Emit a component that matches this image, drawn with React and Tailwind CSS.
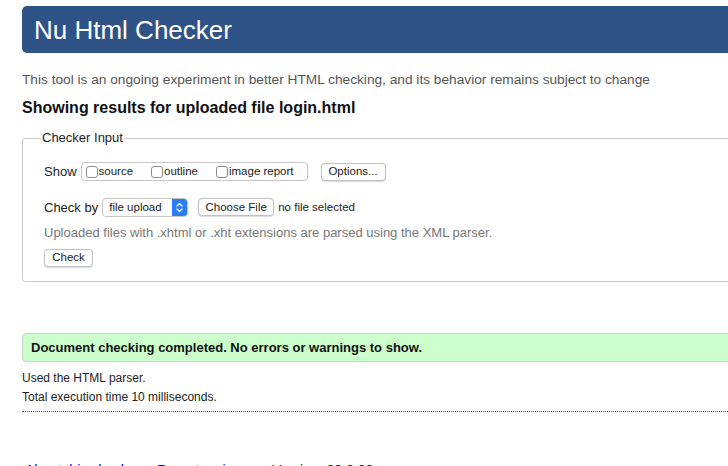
import React from 'react';

const Box = ({ label }) => (
  <label className="flex items-center">
    <span className="w-[12px] h-[12px] border border-[#8d8d8d] rounded-[3px] bg-white mr-[1px]"></span>
    <span>{label}</span>
  </label>
);

const Btn = ({ children, className = '' }) => (
  <span className={`inline-flex items-center whitespace-nowrap px-[6px] h-[18px] border border-[#c2c2c2] rounded-[4px] bg-white shadow-[0_0.5px_1px_rgba(0,0,0,0.15)] text-[11.5px] text-[#222] ${className}`}>
    {children}
  </span>
);

export default function App() {
  return (
    <div className="w-[728px] h-[466px] overflow-hidden bg-white font-['Liberation_Sans',Arial,sans-serif] text-[#222]">
      <div className="w-[760px] pl-[22px] pt-[6px]">
        {/* header bar */}
        <div className="h-[47px] bg-[#2f5387] rounded-l-[5px] flex items-center pl-[12px]">
          <h1 className="text-white text-[26px] leading-none">Nu Html Checker</h1>
        </div>

        <p className="mt-[19px] text-[13.7px] text-[#555] leading-[16px]">
          This tool is an ongoing experiment in better HTML checking, and its behavior remains subject to change
        </p>
        <h2 className="mt-[10px] text-[16px] font-bold leading-[20px] text-[#111]">
          Showing results for uploaded file login.html
        </h2>

        {/* checker input */}
        <fieldset className="mt-[12px] border border-[#c8c8c8] rounded-[3px] pl-[21px] h-[152px]">
          <legend className="text-[13px] px-[1px] ml-[-3px] leading-[16px]">Checker Input</legend>
          <div className="flex items-center mt-[16px] text-[13px]">
            <span className="mr-[4px]">Show</span>
            <div className="flex items-center h-[19px] border border-[#c6c6c6] rounded-[4px] px-[4px] gap-[18px] text-[11.5px] w-[227px]">
              <Box label="source" />
              <Box label="outline" />
              <Box label="image report" />
            </div>
            <Btn className="ml-[13px] w-[65px] justify-center">Options...</Btn>
          </div>
          <div className="flex items-center mt-[16px] text-[13px]">
            <span className="mr-[4px]">Check by</span>
            <span className="flex items-stretch h-[19px] w-[86px] border border-[#c6c6c6] rounded-[4px] overflow-hidden text-[11.5px] bg-white">
              <span className="flex-1 flex items-center pl-[6px]">file upload</span>
              <span className="w-[15px] bg-[#2a7ef4] flex items-center justify-center">
                <svg width="7" height="11" viewBox="0 0 7 11" fill="none" stroke="white" strokeWidth="1.3" strokeLinecap="round" strokeLinejoin="round">
                  <path d="M1 4 L3.5 1.5 L6 4" />
                  <path d="M1 7 L3.5 9.5 L6 7" />
                </svg>
              </span>
            </span>
            <Btn className="ml-[10px] w-[76px] justify-center">Choose File</Btn>
            <span className="ml-[4px] text-[11.5px]">no file selected</span>
          </div>
          <p className="mt-[8px] text-[13px] text-[#777] leading-[16px]">
            Uploaded files with .xhtml or .xht extensions are parsed using the XML parser.
          </p>
          <div className="mt-[3px]">
            <Btn className="w-[49px] justify-center">Check</Btn>
          </div>
        </fieldset>

        {/* result */}
        <div className="mt-[51px] h-[29px] bg-[#ccffcc] border border-[#c4d8c4] rounded-l-[4px] flex items-center pl-[8px]">
          <span className="text-[13px] font-bold text-[#111]">Document checking completed. No errors or warnings to show.</span>
        </div>
        <p className="mt-[9px] text-[12px] leading-[14px]">Used the HTML parser.</p>
        <p className="mt-[5px] text-[12px] leading-[14px]">Total execution time 10 milliseconds.</p>
        <div className="mt-[7px] border-t border-dotted border-[#555]"></div>

        <p className="mt-[49px] text-[14px] leading-[18px] text-[#222] flex gap-[6px] pl-[3px]">
          <a className="text-[#0000ee]">About this checker</a>
          <span>•</span>
          <a className="text-[#0000ee]">Report an issue</a>
          <span>•</span>
          <span>Version: 20.6.30</span>
        </p>
      </div>
    </div>
  );
}
